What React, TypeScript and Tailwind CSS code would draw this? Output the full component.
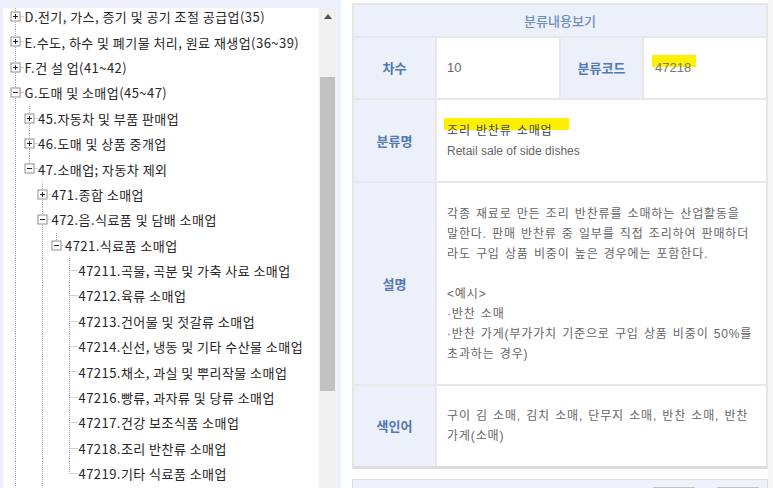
type Row = { lvl: number; text: string; icon?: 'plus' | 'minus'; pass: number[]; last: boolean };

const rows: Row[] = [
  { lvl: 0, text: 'D.전기, 가스, 증기 및 공기 조절 공급업(35)', icon: 'plus', pass: [], last: false },
  { lvl: 0, text: 'E.수도, 하수 및 폐기물 처리, 원료 재생업(36~39)', icon: 'plus', pass: [], last: false },
  { lvl: 0, text: 'F.건 설 업(41~42)', icon: 'plus', pass: [], last: false },
  { lvl: 0, text: 'G.도매 및 소매업(45~47)', icon: 'minus', pass: [], last: false },
  { lvl: 1, text: '45.자동차 및 부품 판매업', icon: 'plus', pass: [0], last: false },
  { lvl: 1, text: '46.도매 및 상품 중개업', icon: 'plus', pass: [0], last: false },
  { lvl: 1, text: '47.소매업; 자동차 제외', icon: 'minus', pass: [0], last: true },
  { lvl: 2, text: '471.종합 소매업', icon: 'plus', pass: [0], last: false },
  { lvl: 2, text: '472.음.식료품 및 담배 소매업', icon: 'minus', pass: [0], last: false },
  { lvl: 3, text: '4721.식료품 소매업', icon: 'minus', pass: [0, 2], last: true },
  { lvl: 4, text: '47211.곡물, 곡분 및 가축 사료 소매업', pass: [0, 2], last: false },
  { lvl: 4, text: '47212.육류 소매업', pass: [0, 2], last: false },
  { lvl: 4, text: '47213.건어물 및 젓갈류 소매업', pass: [0, 2], last: false },
  { lvl: 4, text: '47214.신선, 냉동 및 기타 수산물 소매업', pass: [0, 2], last: false },
  { lvl: 4, text: '47215.채소, 과실 및 뿌리작물 소매업', pass: [0, 2], last: false },
  { lvl: 4, text: '47216.빵류, 과자류 및 당류 소매업', pass: [0, 2], last: false },
  { lvl: 4, text: '47217.건강 보조식품 소매업', pass: [0, 2], last: false },
  { lvl: 4, text: '47218.조리 반찬류 소매업', pass: [0, 2], last: false },
  { lvl: 4, text: '47219.기타 식료품 소매업', pass: [0, 2], last: true },
];

const LINE = '#a8a8a8';
const latin = { fontFamily: '"Liberation Sans", "Noto Sans CJK KR", sans-serif' };

function Guide({ through }: { through: boolean }) {
  return (
    <svg width="13.5" height="25.4" className="shrink-0">
      {through && <line x1="6.5" y1="0" x2="6.5" y2="25.4" stroke={LINE} strokeDasharray="1 1" />}
    </svg>
  );
}

function Own({ icon, last }: { icon?: 'plus' | 'minus'; last: boolean }) {
  return (
    <svg width="13.5" height="25.4" className="shrink-0 overflow-visible">
      <line x1="6.5" y1="0" x2="6.5" y2={last ? 12.5 : 25.4} stroke={LINE} strokeDasharray="1 1" />
      <line x1="6.5" y1="12.5" x2="15" y2="12.5" stroke={LINE} strokeDasharray="1 1" />
      {icon && (
        <g>
          <rect x="2" y="8" width="9" height="9" fill="#fff" stroke="#8e8e8e" />
          <path d="M4 12.5h5" stroke="#222" />
          {icon === 'plus' && <path d="M6.5 10v5" stroke="#222" />}
        </g>
      )}
    </svg>
  );
}

function TreeRow({ row }: { row: Row }) {
  const guides = [];
  for (let l = 0; l < row.lvl; l++) guides.push(<Guide key={l} through={row.pass.includes(l)} />);
  return (
    <div className="flex h-[25.4px] items-center">
      {guides}
      <Own icon={row.icon} last={row.last} />
      <span className="ml-[2px] whitespace-nowrap text-[13px] leading-none tracking-[0.45px] text-[#262626]">
        {row.text}
      </span>
    </div>
  );
}

function Mark({ children, w }: { children: string; w: string }) {
  return (
    <span className="relative inline-block">
      <span className={`absolute -left-[3px] top-[-3px] h-[12px] bg-[#fff000] ${w}`} />
      <span className="relative">{children}</span>
    </span>
  );
}

const label = 'flex items-center justify-center bg-[#ebf0fb] text-[13px] font-bold text-[#5078b2]';

function Field({ name, h, children }: { name: string; h: string; children: React.ReactNode }) {
  return (
    <div className={`flex gap-[2px] ${h}`}>
      <div className={`w-[81px] ${label}`}>{name}</div>
      <div
        className="flex flex-1 flex-col justify-center whitespace-nowrap bg-white pl-[10px] text-[12px] leading-[20px] tracking-[0.85px] text-[#666] [word-spacing:1px]"
        style={latin}
      >
        {children}
      </div>
    </div>
  );
}

export default function App() {
  return (
    <div
      className="flex h-[488px] w-[773px] overflow-hidden bg-white"
      style={{ fontFamily: '"Noto Sans CJK KR", "Noto Sans", sans-serif' }}
    >
      {/* tree */}
      <div className="flex h-full w-[341px] shrink-0 bg-[#eef1fb] pl-[3px] pr-[5px] pt-[8px]">
        <div className="w-[316px] overflow-hidden bg-white pl-[6px]">
          <div className="-mt-[4px]">
            {rows.map((r) => (
              <TreeRow key={r.text} row={r} />
            ))}
          </div>
        </div>
        <div className="flex w-[17px] flex-col bg-[#f0f0f0]">
          <div className="flex h-[17px] items-center justify-center">
            <svg width="8" height="5" viewBox="0 0 8 5">
              <path d="M0 5L4 0L8 5Z" fill="#505050" />
            </svg>
          </div>
          <div className="h-[52px]" />
          <div className="mx-[1px] h-[314px] bg-[#c1c1c1]" />
        </div>
      </div>

      {/* detail */}
      <div className="ml-[11px] flex w-[416px] shrink-0 flex-col pt-[3px]">
        <div className="border-2 border-b-[3px] border-[#e6e6e6] border-b-[#dcdcdc]">
          <div className="flex h-[31px] items-center justify-center bg-[#ebf0fb] text-[13px] font-medium text-[#6f8dbb]">
            분류내용보기
          </div>
          <div className="flex flex-col gap-[2px] bg-[#e8e8e8] pt-[2px]">
            <div className="flex h-[60px] gap-[2px]">
              <div className={`w-[81px] ${label}`}>차수</div>
              <div className="flex w-[122px] items-center bg-white pl-[10px] text-[13px] text-[#666]" style={latin}>
                10
              </div>
              <div className={`w-[81px] ${label}`}>분류코드</div>
              <div className="flex flex-1 items-center bg-white pl-[11px] text-[13px] text-[#777]" style={latin}>
                <Mark w="w-[44px]">47218</Mark>
              </div>
            </div>
            <Field name="분류명" h="h-[81px]">
              <div className="text-[#444]">
                <Mark w="w-[125px]">조리 반찬류 소매업</Mark>
              </div>
              <div className="tracking-normal [word-spacing:0px]">Retail sale of side dishes</div>
            </Field>
            <Field name="설명" h="h-[201px]">
              <div>각종 재료로 만든 조리 반찬류를 소매하는 산업활동을</div>
              <div>말한다. 판매 반찬류 중 일부를 직접 조리하여 판매하더</div>
              <div>라도 구입 상품 비중이 높은 경우에는 포함한다.</div>
              <div>&nbsp;</div>
              <div>&lt;예시&gt;</div>
              <div>·반찬 소매</div>
              <div>·반찬 가게(부가가치 기준으로 구입 상품 비중이 50%를</div>
              <div>초과하는 경우)</div>
            </Field>
            <Field name="색인어" h="h-[80px]">
              <div>구이 김 소매, 김치 소매, 단무지 소매, 반찬 소매, 반찬</div>
              <div>가게(소매)</div>
            </Field>
          </div>
        </div>

        <div className="mt-[10px] flex justify-end gap-[20px] border border-[#dcdcdc] bg-[#eef2fd] pr-[7px] pt-[7px]">
          <div className="h-[24px] w-[44px] rounded-[2px] border border-[#c4c4c4] bg-[#f6f6f6]" />
          <div className="h-[24px] w-[44px] rounded-[2px] border border-[#c4c4c4] bg-[#f6f6f6]" />
        </div>
      </div>
      <div className="flex-1 bg-[#f6f6f6]" />
    </div>
  );
}
